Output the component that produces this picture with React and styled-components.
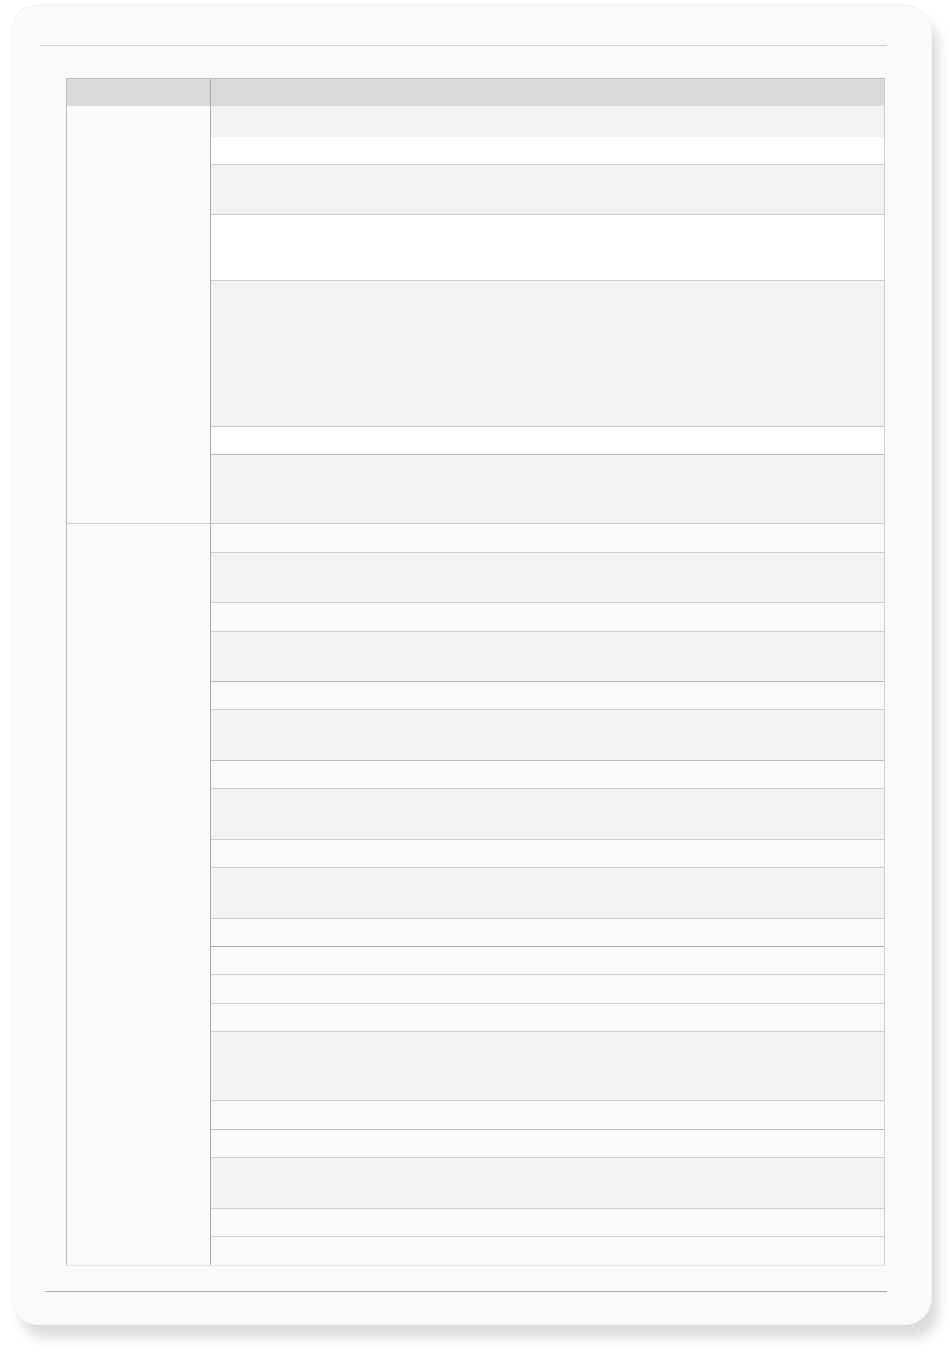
import styled, { createGlobalStyle } from 'styled-components';

const GlobalStyle = createGlobalStyle`
  html, body {
    margin: 0;
    padding: 0;
    background: #ffffff;
    font-family: "Liberation Sans", Arial, sans-serif;
  }
`;

const Page = styled.div`
  padding: 5px 0 0 12px;
  width: 950px;
  height: 1369px;
  box-sizing: border-box;
`;

const Card = styled.div`
  width: 919px;
  height: 1319px;
  box-sizing: border-box;
  padding: 40px 0 32px;
  background: #fafafa;
  border-radius: 26px;
  box-shadow: 0 0 0 1px #f3f3f3, 8px 14px 12px rgba(0, 0, 0, 0.14);
  display: flex;
  flex-direction: column;

  & > * {
    flex: none;
  }
`;

const Rule = styled.div`
  height: 1px;
  margin-left: ${(props) => props.$left}px;
  width: ${(props) => props.$width}px;
  background: ${(props) => props.$color};
`;

const Table = styled.div`
  margin: 32px 0 25px 54px;
  width: 819px;
  box-sizing: border-box;
  border-top: 1px solid #bbbbbb;
  border-left: 1px solid #bbbbbb;
  border-right: 1px solid #cccccc;
  border-bottom: 1px solid #e6e6e6;
  display: flex;
  flex-direction: column;
`;

const HeadRow = styled.div`
  display: flex;
  height: 27px;
  background: #d9d9d9;
`;

const HeadCell = styled.div`
  width: ${(props) => (props.$first ? '144px' : 'auto')};
  flex: ${(props) => (props.$first ? 'none' : '1')};
  box-sizing: border-box;
  border-right: ${(props) => (props.$first ? '1px solid #aaaaaa' : 'none')};
`;

const Group = styled.div`
  display: flex;
  border-bottom: ${(props) => (props.$divided ? '1px solid #cccccc' : 'none')};
`;

const GroupLabel = styled.div`
  width: 144px;
  flex: none;
  box-sizing: border-box;
  background: #fafafa;
  border-right: 1px solid #aaaaaa;
`;

const Rows = styled.div`
  flex: 1;
  display: flex;
  flex-direction: column;
`;

const Row = styled.div`
  height: ${(props) => props.$h}px;
  flex: none;
  box-sizing: border-box;
  background: ${(props) => props.$bg};
  border-bottom: 1px solid ${(props) => props.$line};

  &:last-child {
    border-bottom: none;
  }
`;

const groups = [
  {
    divided: true,
    rows: [
      [31, '#f2f2f2', '#f2f2f2'],
      [28, '#ffffff', '#cccccc'],
      [50, '#f2f2f2', '#cccccc'],
      [66, '#ffffff', '#cccccc'],
      [146, '#f2f2f2', '#c4c4c4'],
      [28, '#ffffff', '#bbbbbb'],
      [68, '#f2f2f2', '#cccccc'],
    ],
  },
  {
    divided: false,
    rows: [
      [29, '#fafafa', '#cccccc'],
      [50, '#f2f2f2', '#cccccc'],
      [29, '#fafafa', '#cccccc'],
      [50, '#f2f2f2', '#bbbbbb'],
      [28, '#fafafa', '#cccccc'],
      [51, '#f2f2f2', '#bbbbbb'],
      [28, '#fafafa', '#cccccc'],
      [51, '#f2f2f2', '#cccccc'],
      [28, '#fafafa', '#cccccc'],
      [51, '#f2f2f2', '#cccccc'],
      [28, '#fafafa', '#aaaaaa'],
      [28, '#fafafa', '#cccccc'],
      [29, '#fafafa', '#cccccc'],
      [28, '#fafafa', '#cccccc'],
      [69, '#f2f2f2', '#cccccc'],
      [29, '#fafafa', '#bbbbbb'],
      [28, '#fafafa', '#cccccc'],
      [51, '#f2f2f2', '#cccccc'],
      [28, '#fafafa', '#cccccc'],
      [28, '#fafafa', '#cccccc'],
    ],
  },
];

export default function App() {
  return (
    <>
      <GlobalStyle />
      <Page>
        <Card>
          <Rule $left={28} $width={847} $color="#d2d2d2" />
          <Table>
            <HeadRow>
              <HeadCell $first />
              <HeadCell />
            </HeadRow>
            {groups.map((group, gi) => (
              <Group key={gi} $divided={group.divided}>
                <GroupLabel />
                <Rows>
                  {group.rows.map(([h, bg, line], ri) => (
                    <Row key={ri} $h={h} $bg={bg} $line={line} />
                  ))}
                </Rows>
              </Group>
            ))}
          </Table>
          <Rule $left={33} $width={842} $color="#aaaaaa" />
        </Card>
      </Page>
    </>
  );
}
